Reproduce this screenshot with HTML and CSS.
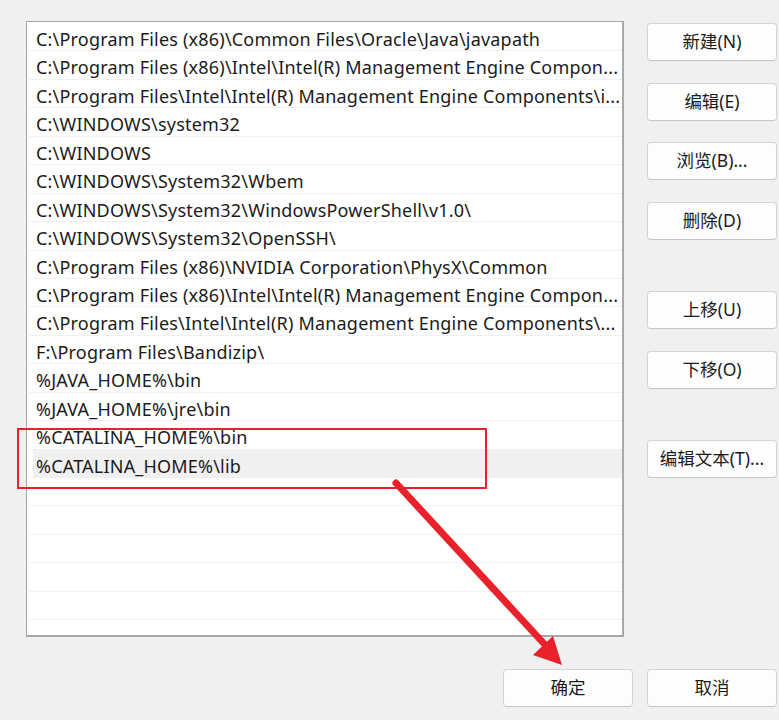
FILE: index.html
```html
<!DOCTYPE html>
<html lang="zh-CN">
<head>
<meta charset="utf-8">
<title>编辑环境变量</title>
<link rel="stylesheet" href="styles.css">
</head>
<body>
<div class="page">
  <div class="main">
    <div class="list">
      <div class="row">C:\Program Files (x86)\Common Files\Oracle\Java\javapath</div>
      <div class="row">C:\Program Files (x86)\Intel\Intel(R) Management Engine Compon...</div>
      <div class="row">C:\Program Files\Intel\Intel(R) Management Engine Components\i...</div>
      <div class="row">C:\WINDOWS\system32</div>
      <div class="row">C:\WINDOWS</div>
      <div class="row">C:\WINDOWS\System32\Wbem</div>
      <div class="row">C:\WINDOWS\System32\WindowsPowerShell\v1.0\</div>
      <div class="row">C:\WINDOWS\System32\OpenSSH\</div>
      <div class="row">C:\Program Files (x86)\NVIDIA Corporation\PhysX\Common</div>
      <div class="row">C:\Program Files (x86)\Intel\Intel(R) Management Engine Compon...</div>
      <div class="row">C:\Program Files\Intel\Intel(R) Management Engine Components\...</div>
      <div class="row">F:\Program Files\Bandizip\</div>
      <div class="row">%JAVA_HOME%\bin</div>
      <div class="row">%JAVA_HOME%\jre\bin</div>
      <div class="row">%CATALINA_HOME%\bin</div>
      <div class="row selected">%CATALINA_HOME%\lib</div>
      <div class="row"></div>
      <div class="row"></div>
      <div class="row"></div>
      <div class="row"></div>
      <div class="row"></div>
      <div class="row"></div>
    </div>
    <div class="side">
      <button class="btn">新建(N)</button>
      <button class="btn">编辑(E)</button>
      <button class="btn">浏览(B)...</button>
      <button class="btn">删除(D)</button>
      <button class="btn gap-lg">上移(U)</button>
      <button class="btn">下移(O)</button>
      <button class="btn gap-lg">编辑文本(T)...</button>
    </div>
  </div>
  <div class="footer">
    <button class="btn">确定</button>
    <button class="btn">取消</button>
  </div>
  <div class="highlight"></div>
  <svg class="arrow" width="779" height="720" viewBox="0 0 779 720">
    <line x1="396" y1="483" x2="548" y2="648" stroke="#e8212b" stroke-width="7" stroke-linecap="round"/>
    <polygon points="562,665 533,655 553,636" fill="#e8212b"/>
  </svg>
</div>
</body>
</html>
```
FILE: styles.css
```css
* { box-sizing: border-box; }
html, body { margin: 0; padding: 0; }
body {
  background: #f0f0f0;
  font-family: "Noto Sans", "Noto Sans CJK SC", sans-serif;
  color: #1b1b1b;
}
.page {
  position: relative;
  width: 779px;
  height: 720px;
  overflow: hidden;
  padding: 21px 0 0 26px;
}
.main {
  display: flex;
  gap: 23px;
}
.list {
  width: 598px;
  height: 616px;
  background: #ffffff;
  border: 1px solid #a6a6a6;
  border-right: 2px solid #a9a9a9;
  border-bottom: 2px solid #a9a9a9;
  padding: 1px 0 0 2px;
  overflow: hidden;
}
.row {
  height: 28.45px;
  border-bottom: 1px solid #f0f0f0;
  padding: 2px 4px 0 7px;
  font-size: 18px;
  letter-spacing: 0.2px;
  line-height: 28px;
  white-space: nowrap;
  overflow: hidden;
}
.row.selected {
  background: linear-gradient(#f0f0f0, #f0f0f0) no-repeat 4px 0 / calc(100% - 4px) 100%;
}
.side {
  display: flex;
  flex-direction: column;
  gap: 21.5px;
  padding-top: 2px;
}
.btn {
  width: 130px;
  height: 38px;
  background: #fdfdfd;
  border: 1px solid #d4d4d4;
  border-bottom-color: #c4c4c4;
  border-radius: 4px;
  font-family: "Noto Sans", "Noto Sans CJK SC", sans-serif;
  font-size: 17.5px;
  color: #1b1b1b;
  padding: 0 0 3px;
}
.gap-lg { margin-top: 30px; }
.footer {
  display: flex;
  justify-content: flex-end;
  gap: 14px;
  padding-right: 2px;
  margin-top: 32px;
}
.footer .btn { height: 38px; }
.highlight {
  position: absolute;
  left: 17px;
  top: 428px;
  width: 470px;
  height: 61px;
  border: 2px solid #e8212b;
}
.arrow {
  position: absolute;
  left: 0;
  top: 0;
  pointer-events: none;
}
```
